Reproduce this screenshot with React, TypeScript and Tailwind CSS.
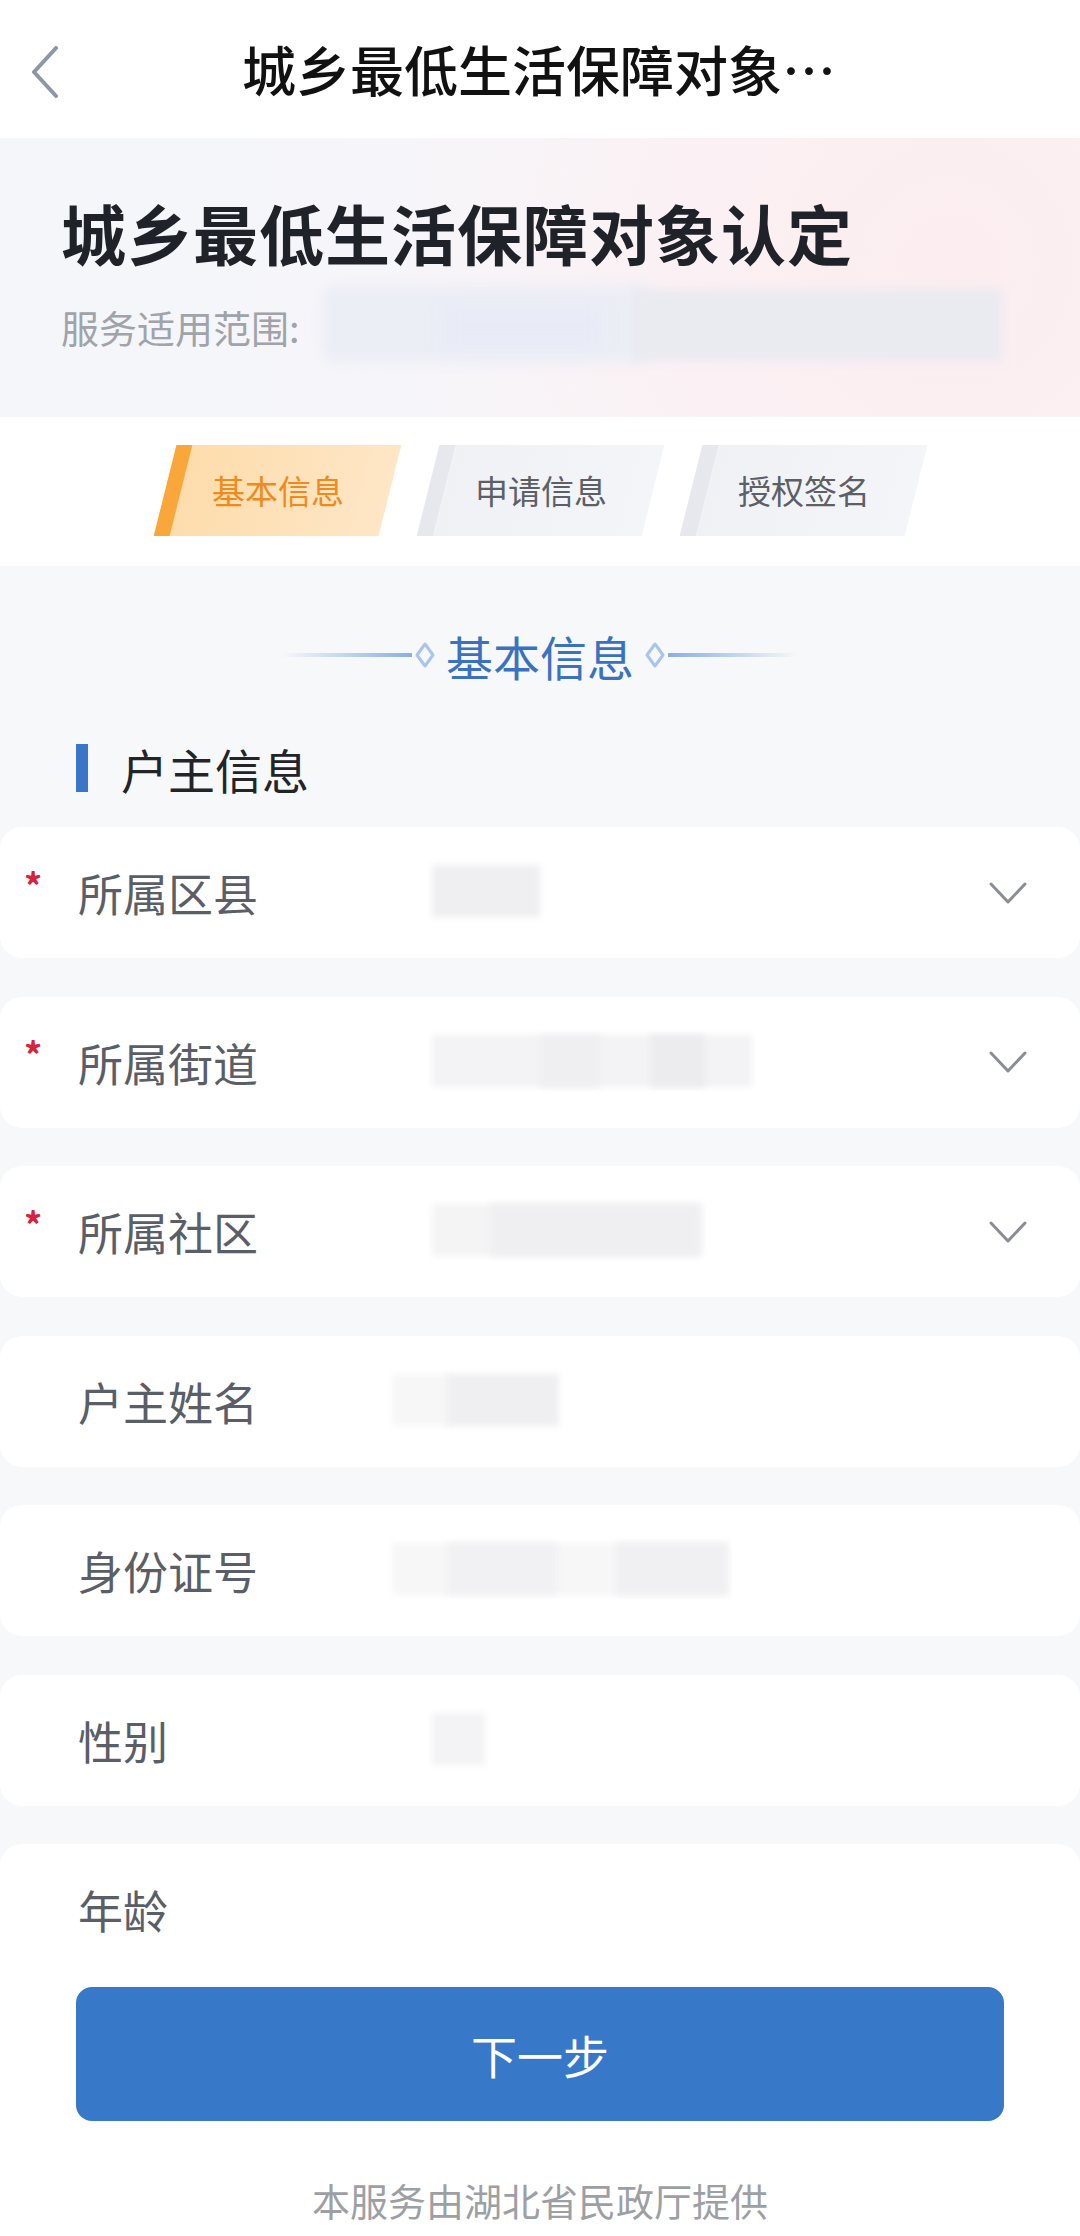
import React from "react";

const F = "font-['Noto_Sans_CJK_SC','Noto_Sans',sans-serif]";

function Chevron() {
  return (
    <svg width="40" height="24" viewBox="0 0 40 24" fill="none">
      <polyline points="3,3 20,21 37,3" stroke="#8a8d93" strokeWidth="3" strokeLinecap="round" strokeLinejoin="round" />
    </svg>
  );
}

type Blk = { l: number; w: number; c: string; t?: number; h?: number };

function Row({ label, req, select, blocks }: { label: string; req?: boolean; select?: boolean; blocks: Blk[] }) {
  return (
    <div className="relative flex h-[131px] items-center rounded-[22px] bg-white">
      {blocks.map((b, i) => (
        <div
          key={i}
          className="absolute blur-[3px]"
          style={{ left: b.l, width: b.w, background: b.c, top: b.t ?? 38, height: b.h ?? 52 }}
        />
      ))}
      <div className="relative flex w-[78px] shrink-0 justify-start pl-[24px]">
        {req && <span className="mt-[-18px] text-[36px] font-bold leading-none text-[#d8213a]">*</span>}
      </div>
      <span className="relative text-[45px] leading-none text-[#5a5e66]">{label}</span>
      <div className="flex-1" />
      {select && (
        <div className="relative mr-[52px] flex items-center">
          <Chevron />
        </div>
      )}
    </div>
  );
}

function Tab({ label, active }: { label: string; active?: boolean }) {
  return (
    <div
      className={
        active
          ? "relative flex h-[91px] w-[225px] -skew-x-[14deg] items-center justify-center overflow-hidden bg-gradient-to-r from-[#fddcaa] to-[#fee6c6]"
          : "relative flex h-[91px] w-[225px] -skew-x-[14deg] items-center justify-center overflow-hidden bg-gradient-to-r from-[#f0f1f5] to-[#f4f5f8]"
      }
    >
      <div className={active ? "absolute bottom-0 left-0 top-0 w-[16px] bg-[#f9a63a]" : "absolute bottom-0 left-0 top-0 w-[16px] bg-[#e6e8ee]"} />
      <span className={active ? "skew-x-[14deg] text-[33px] leading-none text-[#ef8a1d]" : "skew-x-[14deg] text-[33px] leading-none text-[#5c5f66]"}>
        {label}
      </span>
    </div>
  );
}

function Diamond() {
  return (
    <svg width="22" height="28" viewBox="0 0 22 28" fill="none" className="mx-[2px]">
      <polygon points="11,3 19,14 11,25 3,14" stroke="#a9c5ee" strokeWidth="3" fill="#f7f8fa" strokeLinejoin="round" />
    </svg>
  );
}

export default function App() {
  return (
    <div className={`${F} relative flex h-[2236px] w-[1080px] flex-col overflow-hidden bg-[#f7f8fa]`}>
      {/* nav */}
      <div className="relative flex h-[138px] shrink-0 items-center justify-center bg-white">
        <div className="absolute left-[31px] top-[46px]">
          <svg width="28" height="52" viewBox="0 0 28 52" fill="none">
            <polyline points="25,2 3,26 25,50" stroke="#8e96a3" strokeWidth="4" strokeLinecap="round" strokeLinejoin="round" />
          </svg>
        </div>
        <span className="ml-[-2px] text-[54px] font-medium leading-none text-[#111]">城乡最低生活保障对象…</span>
      </div>

      {/* banner */}
      <div className="flex h-[279px] shrink-0 flex-col bg-[radial-gradient(circle_at_88%_45%,#fcedf0_0%,#fbf1f4_30%,#f7f5f9_55%,#f5f6fa_75%)] pl-[61px]">
        <div className="mt-[62px] text-[65px] font-bold leading-none tracking-[1px] text-[#1f2329]">城乡最低生活保障对象认定</div>
        <div className="mt-[24px] flex items-center">
          <span className="text-[38px] leading-none text-[#a0a3a9]">服务适用范围:</span>
          <div className="relative ml-[22px] mt-[-6px] h-[82px] w-[700px]">
            <div className="absolute left-[0px] top-[2px] h-[78px] w-[330px] rounded-[14px] bg-[#eceef6] blur-[6px]" />
            <div className="absolute left-[310px] top-[6px] h-[72px] w-[370px] bg-[#eaeaf1] blur-[5px]" />
            <div className="absolute left-[120px] top-[22px] h-[44px] w-[160px] bg-[#e8ebf6] blur-[8px]" />
          </div>
        </div>
      </div>

      {/* tabs */}
      <div className="flex h-[149px] shrink-0 items-start justify-center gap-[38px] bg-white pt-[28px]">
        <Tab label="基本信息" active />
        <Tab label="申请信息" />
        <Tab label="授权签名" />
      </div>

      {/* section title */}
      <div className="flex h-[178px] shrink-0 items-center justify-center">
        <div className="h-[4px] w-[130px] bg-gradient-to-r from-transparent to-[#8aaee2]" />
        <Diamond />
        <span className="mx-[8px] text-[47px] leading-none text-[#3b72bf]">基本信息</span>
        <Diamond />
        <div className="h-[4px] w-[130px] bg-gradient-to-r from-[#8aaee2] to-transparent" />
      </div>

      {/* sub header */}
      <div className="flex h-[48px] shrink-0 items-center pl-[76px]">
        <div className="h-[48px] w-[12px] bg-[#3a76c8]" />
        <span className="ml-[33px] text-[47px] leading-none text-[#222428]">户主信息</span>
      </div>

      {/* rows */}
      <div className="mt-[35px] flex shrink-0 flex-col gap-[38.5px]">
        <Row label="所属区县" req select blocks={[{ l: 432, w: 108, c: "#efeff1" }]} />
        <Row
          label="所属街道"
          req
          select
          blocks={[
            { l: 432, w: 320, c: "#f3f3f5" },
            { l: 540, w: 60, c: "#efeff1" },
            { l: 650, w: 55, c: "#ececee" },
          ]}
        />
        <Row
          label="所属社区"
          req
          select
          blocks={[
            { l: 432, w: 270, c: "#f4f4f5" },
            { l: 490, w: 210, c: "#efeff1" },
          ]}
        />
        <Row
          label="户主姓名"
          blocks={[
            { l: 392, w: 60, c: "#f7f7f8" },
            { l: 447, w: 112, c: "#efeff1" },
          ]}
        />
        <Row
          label="身份证号"
          blocks={[
            { l: 392, w: 336, c: "#f7f7f8" },
            { l: 447, w: 110, c: "#f1f1f3" },
            { l: 615, w: 113, c: "#f0f0f2" },
          ]}
        />
        <Row label="性别" blocks={[{ l: 432, w: 53, c: "#f3f3f5" }]} />
      </div>

      {/* bottom */}
      <div className="mt-[38.5px] flex flex-1 flex-col rounded-t-[22px] bg-white">
        <div className="flex h-[131px] items-center pl-[78px]">
          <span className="text-[45px] leading-none text-[#5a5e66]">年龄</span>
        </div>
        <div className="mx-[76px] mt-[12px] flex h-[134px] items-center justify-center rounded-[16px] bg-[#3878c8]">
          <span className="text-[46px] leading-none text-white">下一步</span>
        </div>
        <div className="mt-[60px] flex justify-center">
          <span className="text-[38px] leading-none text-[#9c9fa4]">本服务由湖北省民政厅提供</span>
        </div>
      </div>
    </div>
  );
}
